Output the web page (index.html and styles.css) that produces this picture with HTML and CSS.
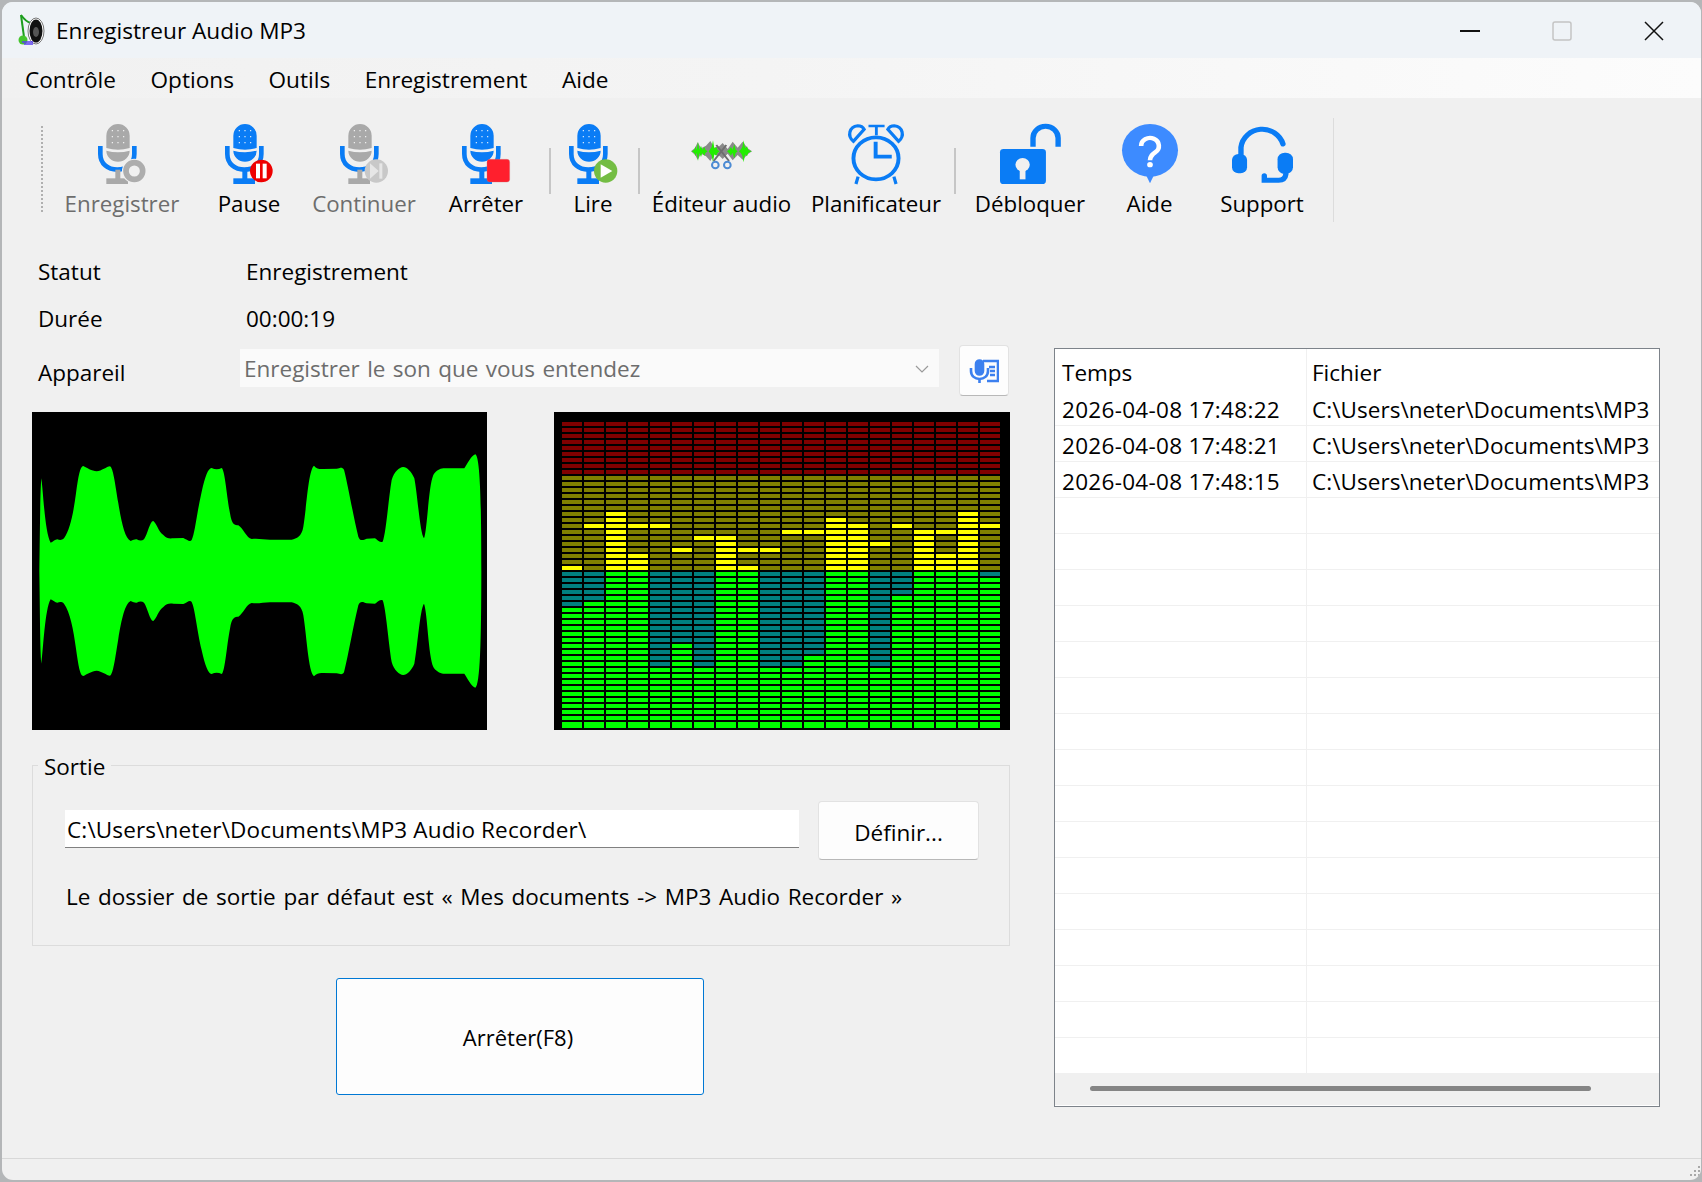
FILE: index.html
```html
<!DOCTYPE html>
<html lang="fr">
<head>
<meta charset="utf-8">
<title>Enregistreur Audio MP3</title>
<link rel="stylesheet" href="styles.css">
</head>
<body>
<svg class="defs" width="0" height="0" aria-hidden="true">
  <defs>
    <symbol id="mic" viewBox="0 0 144 180" overflow="visible">
      <path d="M25 35a35 35 0 0 1 70 0v37q-35 10-70 0z"/>
      <path d="M25 80q35 10 70 0a35 33 0 0 1-70 0z"/>
      <g fill="#fff">
        <circle cx="43" cy="20" r="2"/><circle cx="60" cy="20" r="2"/><circle cx="77" cy="20" r="2"/>
        <circle cx="43" cy="38" r="2"/><circle cx="60" cy="38" r="2"/><circle cx="77" cy="38" r="2"/>
        <circle cx="43" cy="56" r="2"/><circle cx="60" cy="56" r="2"/><circle cx="77" cy="56" r="2"/>
      </g>
      <path class="mic-u" d="M7 66v24c0 30 23 47 51 47s51-17 51-47V66"/>
      <rect x="52" y="137" width="15" height="28"/>
      <rect x="25" y="163" width="65" height="17"/>
    </symbol>
  </defs>
</svg>
<div class="window">
  <header class="titlebar">
    <svg class="app-icon" viewBox="0 0 27 32">
      <path d="M3 1l3 22" stroke="#1e9e1e" stroke-width="2" fill="none"/>
      <path d="M3 1q5 7 10 8" stroke="#1e9e1e" stroke-width="2" fill="none"/>
      <circle cx="5" cy="26" r="4.5" fill="#45c52d"/>
      <ellipse cx="18" cy="17" rx="8" ry="13" fill="#fff" stroke="#777" stroke-width="1"/>
      <ellipse cx="18" cy="17" rx="6.5" ry="11.500" fill="#111"/>
      <ellipse cx="18" cy="18" rx="3" ry="5" fill="#555"/>
      <path d="M4 28h11M6 30h9" stroke="#5a3ff0" stroke-width="1.500" fill="none"/>
    </svg>
    <span class="title">Enregistreur Audio MP3</span>
    <div class="win-controls">
      <svg class="win-btn" viewBox="0 0 20 20"><path d="M0 10h20" stroke="#111" stroke-width="2"/></svg>
      <svg class="win-btn" viewBox="0 0 20 20"><rect x="1" y="1" width="18" height="18" rx="2" fill="none" stroke="#c4c4c4" stroke-width="1.500"/></svg>
      <svg class="win-btn" viewBox="0 0 20 20"><path d="M1 1l18 18M19 1L1 19" stroke="#111" stroke-width="1.500"/></svg>
    </div>
  </header>

  <nav class="menubar">
    <span>Contrôle</span><span>Options</span><span>Outils</span><span>Enregistrement</span><span>Aide</span>
  </nav>

  <div class="toolbar">
    <div class="gripper"></div>
    <div class="tool off">
      <div class="tool-icon"><svg class="ic-mic" viewBox="0 0 144 180">
        <use href="#mic"/>
        <circle cx="109" cy="141" r="37" fill="#f0f0f0"/>
        <circle cx="109" cy="141" r="25" fill="none" stroke="#adadad" stroke-width="17"/>
      </svg></div>
      <span>Enregistrer</span>
    </div>
    <div class="tool">
      <div class="tool-icon"><svg class="ic-mic" viewBox="0 0 144 180">
        <use href="#mic"/>
        <circle cx="109" cy="141" r="34" fill="#ee0000"/>
        <rect x="93" y="119" width="12" height="44" fill="#fff"/>
        <rect x="113" y="119" width="12" height="44" fill="#fff"/>
      </svg></div>
      <span>Pause</span>
    </div>
    <div class="tool off">
      <div class="tool-icon"><svg class="ic-mic" viewBox="0 0 144 180">
        <use href="#mic"/>
        <circle cx="109" cy="141" r="35" fill="#c8c8c8"/>
        <path d="M90 118l26 23-26 23z" fill="#e6e6e6"/>
        <rect x="118" y="118" width="9" height="46" fill="#e6e6e6"/>
      </svg></div>
      <span>Continuer</span>
    </div>
    <div class="tool">
      <div class="tool-icon"><svg class="ic-mic" viewBox="0 0 144 180">
        <use href="#mic"/>
        <rect x="75" y="106" width="68" height="68" rx="8" fill="#ff1f2d" stroke="#c9777c" stroke-width="1"/>
      </svg></div>
      <span>Arrêter</span>
    </div>
    <div class="sep"></div>
    <div class="tool">
      <div class="tool-icon"><svg class="ic-mic" viewBox="0 0 144 180">
        <use href="#mic"/>
        <circle cx="110" cy="141" r="35" fill="#74bd44"/>
        <path d="M95 121l35 20-35 20z" fill="#fff"/>
      </svg></div>
      <span>Lire</span>
    </div>
    <div class="sep"></div>
    <div class="tool">
      <div class="tool-icon"><svg class="ic-edit" viewBox="0 0 183 93">
        <path fill="#8a8a8a" d="M0 37L12 27 20 10 30 28 45 20 58 6 70 26 85 22 95 12 110 30 125 8 140 26 155 8 170 28 183 37 170 46 155 62 140 48 125 64 110 44 95 60 85 50 70 46 58 66 45 52 30 44 20 62 12 47Z"/>
        <path fill="#22ee00" d="M2 37L10 32 13 22 17 33 21 8 25 32 30 20 34 32 40 24 44 33 50 37 44 41 40 50 34 42 30 54 25 42 21 66 17 41 13 52 10 42Z"/>
        <path fill="#22ee00" d="M53 37L58 30 62 24 66 4 70 28 76 24 80 33 86 37 80 41 76 50 70 46 66 70 62 50 58 44Z"/>
        <path fill="#22ee00" d="M108 37L114 32 120 24 124 33 130 16 134 32 140 37 134 42 130 58 124 41 120 50 114 42Z"/>
        <path fill="#22ee00" d="M144 37L150 31 154 24 158 4 162 28 168 22 172 33 182 37 172 41 168 52 162 46 158 70 154 50 150 43Z"/>
        <path d="M68 66L106 18M114 66L76 18" stroke="#6e6e6e" stroke-width="6" fill="none"/>
        <circle cx="73" cy="78" r="10" fill="none" stroke="#4c8bd4" stroke-width="6"/>
        <circle cx="109" cy="78" r="10" fill="none" stroke="#4c8bd4" stroke-width="6"/>
      </svg></div>
      <span>Éditeur audio</span>
    </div>
    <div class="tool tool-plan">
      <div class="tool-icon"><svg class="ic-clock" viewBox="0 0 162 180" preserveAspectRatio="none">
        <g fill="none" stroke="#0a7cf5">
          <circle cx="81" cy="103" r="63" stroke-width="11"/>
          <path d="M80 53v45h45" stroke-width="11"/>
          <path d="M18 52C0 36 6 8 30 5c9 0 15 5 18 11z" stroke-width="9"/>
          <path d="M144 52c18-16 12-44-12-47-9 0-15 5-18 11z" stroke-width="9"/>
          <path d="M60 6h45M82 6v28" stroke-width="8"/>
          <path d="M31 158l-6 22M131 158l6 22" stroke-width="9"/>
        </g>
      </svg></div>
      <span>Planificateur</span>
    </div>
    <div class="sep"></div>
    <div class="tool">
      <div class="tool-icon"><svg class="ic-lock" viewBox="0 0 170 180" preserveAspectRatio="none">
        <rect y="75" width="128" height="105" rx="10" fill="#0a7cf5"/>
        <circle cx="63" cy="122" r="20" fill="#f0f0f0"/>
        <rect x="55" y="126" width="16" height="40" fill="#f0f0f0"/>
        <path d="M92 68V42a35 35 0 0 1 70 0v26" fill="none" stroke="#0a7cf5" stroke-width="15"/>
      </svg></div>
      <span>Débloquer</span>
    </div>
    <div class="tool">
      <div class="tool-icon"><svg class="ic-help" viewBox="0 0 158 180" preserveAspectRatio="none">
        <circle cx="79" cy="79" r="79" fill="#3d8bff"/>
        <path d="M68 154l11 24 11-24z" fill="#3d8bff"/>
        <path d="M54 66a25 24 0 1 1 40 19c-9 7-15 12-15 24" fill="none" stroke="#fff" stroke-width="13"/>
        <circle cx="79" cy="122" r="8" fill="#fff"/>
      </svg></div>
      <span>Aide</span>
    </div>
    <div class="tool">
      <div class="tool-icon"><svg class="ic-head" viewBox="0 0 170 180" preserveAspectRatio="none">
        <g fill="#0a7cf5">
          <rect y="90" width="42" height="58" rx="18"/>
          <rect x="127" y="86" width="43" height="64" rx="20"/>
        </g>
        <g fill="none" stroke="#0a7cf5" stroke-width="15" stroke-linecap="round">
          <path d="M25 90V70a60 62 0 0 1 117-10"/>
          <path d="M90 155v14h40q18 0 20-18"/>
        </g>
      </svg></div>
      <span>Support</span>
    </div>
    <div class="tool-end"></div>
  </div>

  <main class="main">
    <section class="left">
      <div class="info-row"><span class="info-label">Statut</span><span>Enregistrement</span></div>
      <div class="info-row"><span class="info-label">Durée</span><span>00:00:19</span></div>
      <div class="device-row">
        <span class="device-label">Appareil</span>
        <div class="combo">
          <span>Enregistrer le son que vous entendez</span>
          <svg class="chevron" viewBox="0 0 14 8"><path d="M1 1l6 6 6-6" fill="none" stroke="#9a9a9a" stroke-width="1.200"/></svg>
        </div>
        <button class="icon-btn" type="button">
          <svg class="ic-device" viewBox="0 0 30 24">
            <g fill="none" stroke="#3c80ef" stroke-width="2.600">
              <rect x="7" y="1.500" width="7" height="14" rx="3.500" fill="#3c80ef"/>
              <path d="M2 9v3c0 5 4 8 8.500 8s8.500-3 8.500-8V9"/>
              <path d="M14 2h15v20H18"/>
              <path d="M20 8h6M21 12h5M21 16h5"/>
              <path d="M10.500 20v4"/>
            </g>
          </svg>
        </button>
      </div>

      <div class="scopes">
        <div class="scope">
          <svg class="wave" viewBox="36 36 1365 954" preserveAspectRatio="none">
            <path id="wave-top" fill="#00ff00" d="M58 513C60 400 60 280 64 235C70 280 75 400 92 428C100 425 105 418 112 418C118 420 125 422 132 415C150 390 160 340 168 280C175 230 180 198 190 198C200 203 215 213 230 214C245 213 260 200 270 199C280 205 285 250 295 310C305 370 315 415 332 423C340 420 345 417 350 418C358 422 365 424 372 418C382 405 390 362 400 363C410 370 415 395 430 405C440 415 445 416 460 415L490 414C500 418 510 428 515 420C525 400 530 340 545 275C555 230 565 203 575 204C585 209 595 209 605 204C615 210 620 290 630 340C635 375 645 376 655 376C670 385 680 415 695 417C710 414 730 418 750 419L815 419C830 415 845 410 850 380C860 320 865 210 882 197C890 207 900 208 910 207L950 206C960 205 965 199 972 209C985 260 1000 350 1015 410C1020 425 1030 420 1040 416L1065 415C1072 418 1078 430 1088 425C1098 400 1105 300 1115 240C1122 215 1140 200 1150 201C1160 201 1175 215 1183 235C1192 280 1200 400 1212 415C1222 390 1225 260 1240 225C1245 215 1260 205 1270 205L1333 205C1340 195 1355 165 1366 163C1380 170 1384 300 1384 513Z"/>
            <use href="#wave-top" transform="matrix(1 0 0 -1 0 1026)"/>
          </svg>
        </div>
        <div class="eq"><div class="eq-grid" id="eq"></div></div>
      </div>

      <fieldset class="output">
        <legend>Sortie</legend>
        <div class="output-row">
          <div class="path-input">C:\Users\neter\Documents\MP3 Audio Recorder\</div>
          <button class="btn-set" type="button">Définir...</button>
        </div>
        <p class="note">Le dossier de sortie par défaut est « Mes documents -&gt; MP3 Audio Recorder »</p>
      </fieldset>

      <button class="btn-stop" type="button">Arrêter(F8)</button>
    </section>

    <aside class="list">
      <div class="list-scroll">
        <table class="files">
          <colgroup><col class="col-time"><col></colgroup>
          <thead><tr><th>Temps</th><th>Fichier</th></tr></thead>
          <tbody>
            <tr><td class="stamp">2026-04-08 17:48:22</td><td>C:\Users\neter\Documents\MP3</td></tr>
            <tr><td class="stamp">2026-04-08 17:48:21</td><td>C:\Users\neter\Documents\MP3</td></tr>
            <tr><td class="stamp">2026-04-08 17:48:15</td><td>C:\Users\neter\Documents\MP3</td></tr>
            <tr><td></td><td></td></tr><tr><td></td><td></td></tr><tr><td></td><td></td></tr><tr><td></td><td></td></tr>
            <tr><td></td><td></td></tr><tr><td></td><td></td></tr><tr><td></td><td></td></tr><tr><td></td><td></td></tr>
            <tr><td></td><td></td></tr><tr><td></td><td></td></tr><tr><td></td><td></td></tr><tr><td></td><td></td></tr>
            <tr><td></td><td></td></tr><tr><td></td><td></td></tr><tr><td></td><td></td></tr><tr><td></td><td></td></tr>
          </tbody>
        </table>
      </div>
      <div class="hscroll"><div class="hthumb"></div></div>
    </aside>
  </main>

  <footer class="statusbar">
    <svg class="grip" viewBox="0 0 12 12"><g fill="#a8a8a8"><rect x="9" y="0" width="2" height="2"/><rect x="5" y="4" width="2" height="2"/><rect x="9" y="4" width="2" height="2"/><rect x="1" y="8" width="2" height="2"/><rect x="5" y="8" width="2" height="2"/><rect x="9" y="8" width="2" height="2"/></g></svg>
  </footer>
</div>
<script src="script.js"></script>
</body>
</html>
```
FILE: styles.css
```css
* { box-sizing: border-box; }
html, body { margin: 0; height: 100%; }
body {
  background: #b4b6b8;
  overflow: hidden;
  font-family: "Open Sans", "Noto Sans", sans-serif;
  font-size: 22.5px;
  color: #000;
}
.defs { position: absolute; }
.window {
  margin: 2px 1px 2px 2px;
  height: 1178px;
  background: #f0f0f0;
  border-radius: 11px;
  overflow: hidden;
  display: flex;
  flex-direction: column;
}

.titlebar {
  height: 56px;
  flex: none;
  background: #eff3f7;
  display: flex;
  align-items: center;
  padding-left: 16px;
}
.app-icon { width: 27px; height: 32px; flex: none; }
.title { margin-left: 11px; margin-top: 1px; font-size: 22.6px; }
.win-controls { margin-left: auto; display: flex; gap: 72px; padding-right: 37px; padding-top: 2px; }
.win-btn { width: 20px; height: 20px; display: block; }

.menubar {
  height: 40px;
  flex: none;
  background: linear-gradient(to right, #f1f1f1, #f4f4f4 45%, #fcfcfc);
  display: flex;
  align-items: center;
  gap: 34.6px;
  padding: 2px 0 0 23px;
  font-size: 22.6px;
}

.toolbar {
  height: 124px;
  flex: none;
  display: grid;
  grid-template-columns: 2px 158px 96px 134px 110px 18px 68px 24px 141px 159px 8px 142px 97px 128px 8px;
  padding-left: 39px;
  font-size: 22.3px;
}
.gripper { border-left: 2px dotted #b0b0b0; height: 86px; margin-top: 28px; }
.tool {
  display: flex;
  flex-direction: column;
  align-items: center;
  padding-top: 26px;
  min-width: 0;
}
.tool span { line-height: 30px; margin-top: 5px; white-space: nowrap; }
.tool.off span { color: #6d6d6d; }
.tool-plan { padding-left: 9px; }
.tool-icon { height: 60px; display: flex; align-items: center; justify-content: center; }
.tool-icon svg { display: block; overflow: visible; }
.sep { width: 1.5px; height: 46px; background: #c6c6c6; margin-top: 50px; justify-self: center; }
.tool-end { width: 1px; height: 104px; background: #dcdcdc; margin-top: 20px; justify-self: end; }

.ic-mic { width: 48px; height: 60px; }
.off .ic-mic { fill: #a9a9a9; }
.off .mic-u { stroke: #a9a9a9; }
.ic-mic { fill: #0a7cf5; }
.mic-u { fill: none; stroke: #0a7cf5; stroke-width: 14; }
.ic-edit { width: 61px; height: 31px; }
.ic-clock { width: 58px; height: 60px; }
.ic-lock { width: 61px; height: 60px; }
.ic-help { width: 56px; height: 60px; }
.ic-head { width: 61px; height: 60px; }

.main {
  flex: 1;
  display: flex;
  padding-left: 30px;
  gap: 44px;
  min-height: 0;
}
.left { width: 978px; flex: none; padding-top: 26px; display: flex; flex-direction: column; align-items: flex-start; }
.left > * { flex: none; }
.info-row { height: 47px; display: flex; align-items: center; padding-left: 6px; }
.info-label { width: 208px; }
.device-row { display: flex; width: 100%; margin-top: 3px; height: 51px; }
.device-label { width: 208px; padding-left: 6px; line-height: 30px; padding-top: 13px; }
.combo {
  width: 699px;
  height: 38px;
  margin-top: 4px;
  padding: 1px 10px 0 4px;
  background: #fafafa;
  color: #6d6d6d;
  display: flex;
  align-items: center;
  justify-content: space-between;
  word-spacing: 1.5px;
}
.chevron { width: 14px; height: 8px; display: block; }
.icon-btn {
  width: 50px;
  height: 51px;
  margin-left: 20px;
  padding: 0;
  background: #fdfdfd;
  border: 1.5px solid #e2e2e2;
  border-bottom-color: #b8b8b8;
  border-radius: 4px;
  display: flex;
  align-items: center;
  justify-content: center;
}
.ic-device { width: 30px; height: 24px; display: block; }

.scopes { display: flex; justify-content: space-between; width: 100%; margin-top: 16px; }
.scope { width: 455px; height: 318px; background: #000; }
.wave { width: 100%; height: 100%; display: block; }
.eq { width: 456px; height: 318px; background: #000; padding: 10px 0 0 8px; }
.eq-grid {
  display: grid;
  grid-template-columns: repeat(20, 20px);
  grid-template-rows: repeat(50, 4px) 6px;
  gap: 2px;
}
.c-r { background: #800000; }
.c-o { background: #808000; }
.c-y { background: #ffff00; }
.c-t { background: #008080; }
.c-g { background: #00ff00; }

.output {
  width: 100%;
  height: 198px;
  margin: 18px 0 0;
  padding: 0;
  min-width: 0;
  border: 1.5px solid #dcdcdc;
}
.output legend { margin-left: 5px; padding: 4px 6px 0; line-height: 30px; }
.output-row { display: flex; padding: 19px 0 0 32px; align-items: flex-start; }
.path-input {
  width: 734px;
  height: 38px;
  margin-top: 9px;
  padding: 1px 0 0 2px;
  line-height: 38px;
  background: #fff;
  border-bottom: 1.5px solid #808080;
  letter-spacing: 0.15px;
}
.btn-set {
  width: 161px;
  height: 59px;
  margin-left: 19px;
  padding: 3px 0 0;
  font: inherit;
  background: #fdfdfd;
  border: 1.5px solid #e2e2e2;
  border-bottom-color: #b8b8b8;
  border-radius: 4px;
}
.note { margin: 22px 0 0 33px; line-height: 30px; word-spacing: 1.8px; }

.btn-stop {
  width: 368px;
  height: 117px;
  margin: 32px 0 0 304px;
  padding: 0 4px 0 0;
  font: inherit;
  font-size: 22px;
  background: #fdfdfd;
  border: 1.5px solid #0078d4;
  border-radius: 3px;
}

.list {
  width: 606px;
  flex: none;
  margin-top: 126px;
  height: 759px;
  background: #fff;
  border: 1.5px solid #7d838a;
  display: flex;
  flex-direction: column;
}
.list-scroll { height: 724px; overflow: hidden; flex: none; }
.files { border-collapse: separate; border-spacing: 0; table-layout: fixed; width: 100%; }
.col-time { width: 252px; }
.files th {
  height: 41px;
  padding: 6px 0 0 7px;
  line-height: 26px;
  font-weight: 400;
  text-align: left;
  border-right: 1.5px solid #f0f0f0;
}
.files th:last-child { border-right: 0; padding-left: 5px; }
.files td {
  height: 36px;
  padding: 4px 0 0 7px;
  line-height: 26px;
  white-space: nowrap;
  overflow: hidden;
  border-right: 1.5px solid #f0f0f0;
  border-bottom: 1.5px solid #f0f0f0;
}
.files td:last-child { border-right: 0; padding-left: 5px; letter-spacing: 0.05px; }
.files .stamp { letter-spacing: 0.3px; }
.hscroll {
  flex: 1;
  background: #f0f0f0;
  margin-bottom: 1px;
  padding: 13px 0 0 35px;
}
.hthumb { width: 501px; height: 5px; border-radius: 3px; background: #858585; }

.statusbar {
  flex: none;
  height: 22px;
  border-top: 1.5px solid #d8d8d8;
  display: flex;
  justify-content: flex-end;
  align-items: flex-end;
  padding: 0 0 2px;
}
.grip { width: 12px; height: 12px; display: block; }
```
FILE: script.js
```js
// Level meter: 20 columns, 51 rows. Rows 0-8 red, 9-24 olive, 25-50 green.
var yellow = [
  [15], [8], [6,7,8,9,10,11,12,13,14,15], [8,13,14,15], [8], [12], [10],
  [10,11,12,13,14,15], [12,15], [12], [9], [9], [7,8,9,10,11,12,13,14,15],
  [8,9,10,11,12,13,14,15], [11], [8], [9,10,11,12,13,14,15], [9,13,14,15],
  [6,7,8,9,10,11,12,13,14,15], [8]
];
var teal = [6,5,0,0,16,12,16,0,0,16,16,14,0,0,16,4,0,0,0,1];
var eq = document.getElementById('eq');
var html = '';
for (var r = 0; r < 51; r++) {
  for (var c = 0; c < 20; c++) {
    var cls;
    if (r < 9) cls = 'c-r';
    else if (r < 25) cls = yellow[c].indexOf(r - 9) >= 0 ? 'c-y' : 'c-o';
    else cls = (r - 25) < teal[c] ? 'c-t' : 'c-g';
    html += '<span class="' + cls + '"></span>';
  }
}
eq.innerHTML = html;
```
